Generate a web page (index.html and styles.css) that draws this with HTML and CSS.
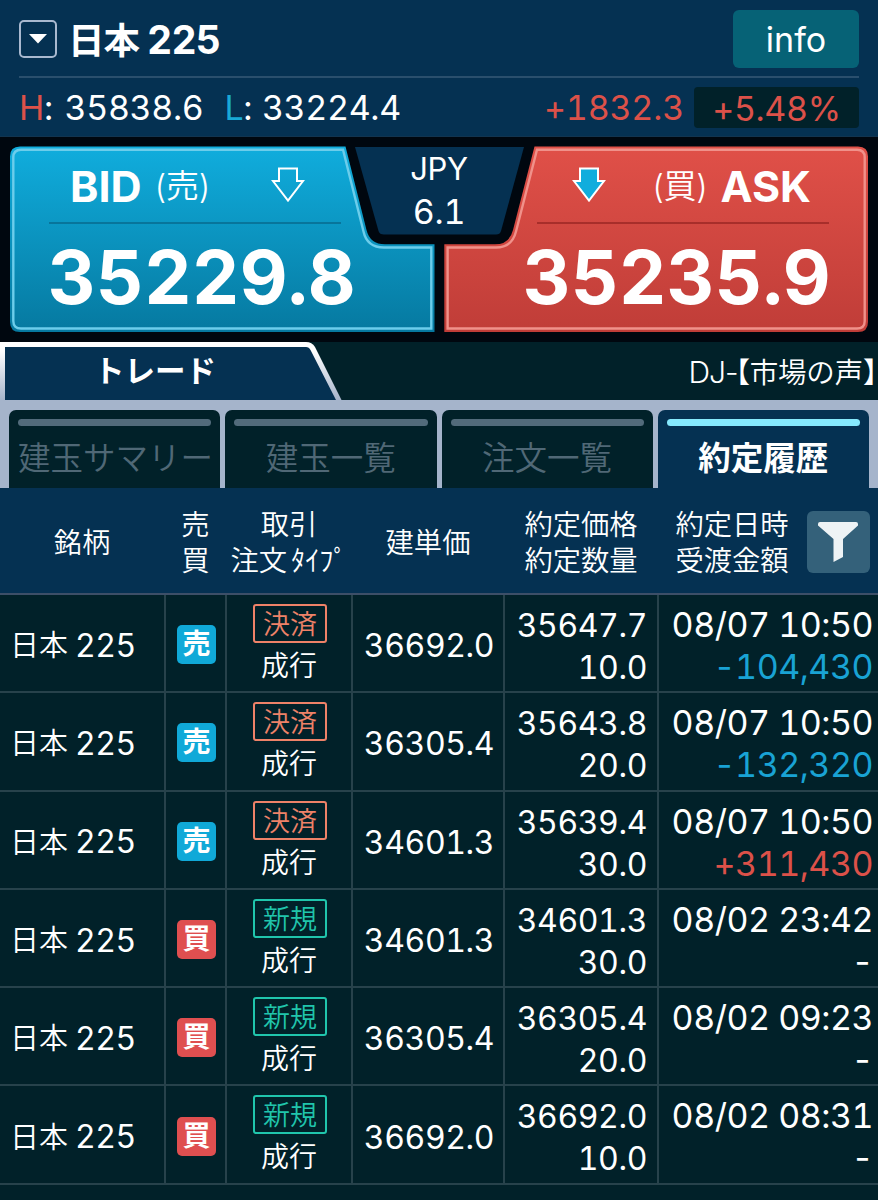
FILE: index.html
```html
<!DOCTYPE html>
<html lang="ja">
<head>
    <meta charset="UTF-8">
    <meta name="viewport" content="width=device-width, initial-scale=1.0">
    <title>日本225 - 約定履歴</title>
    <link rel="stylesheet" href="styles.css">
</head>
<body>
    <header class="header">
        <div class="title-row">
            <button type="button" class="dropdown" aria-label="銘柄選択"><svg width="18" height="10" viewBox="0 0 18 10"><path d="M0 0h18L9 9.500z" fill="#fff"/></svg></button>
            <h1>日本<span class="num">225</span></h1>
            <button type="button" class="btn-info">info</button>
        </div>
        <div class="stats-row">
            <span class="high"><b>H</b>: 35838.6</span>
            <span class="low"><b>L</b>: 33224.4</span>
            <span class="change">+1832.3</span>
            <span class="percent">+5.48%</span>
        </div>
    </header>

    <section class="prices">
        <svg class="price-shapes" width="878" height="206" viewBox="0 136 878 206">
            <defs>
                <linearGradient id="bid-fill" x1="0" y1="0" x2="0" y2="1">
                    <stop offset="0" stop-color="#10addd"/>
                    <stop offset="1" stop-color="#0679a0"/>
                </linearGradient>
                <linearGradient id="ask-fill" x1="0" y1="0" x2="0" y2="1">
                    <stop offset="0" stop-color="#e05048"/>
                    <stop offset="1" stop-color="#c03d38"/>
                </linearGradient>
            </defs>
            <path d="M20 146.500H345.500L366.500 230Q370 244.300 385 244.300H434.500V332H20Q10 332 10 322V156.500Q10 146.500 20 146.500Z" fill="url(#bid-fill)"/>
            <path d="M21 149.800H343L363.500 231.500Q367 247.500 384 247.500H431.300V328.500H21Q13.300 328.500 13.300 321V157.500Q13.300 149.800 21 149.800Z" fill="none" stroke="#6ccdeb" stroke-width="2.400"/>
            <path d="M858 146.500H534.500L513 230Q509.500 244.300 495 244.300H444.300V332H858Q868 332 868 322V156.500Q868 146.500 858 146.500Z" fill="url(#ask-fill)"/>
            <path d="M857 149.800H537L516 231.500Q512 247.500 496 247.500H447.600V328.500H857Q864.700 328.500 864.700 321V157.500Q864.700 149.800 857 149.800Z" fill="none" stroke="#f0918a" stroke-width="2.400"/>
            <path d="M355 147H524L501 231Q500 234.500 496 234.500H384Q379.500 234.500 378.500 231Z" fill="#053152"/>
        </svg>
        <div class="price bid">
            <div class="price-head">
                <strong>BID</strong><span class="side">(売)</span>
                <svg class="arrow" width="34" height="36" viewBox="0 0 34 36"><path d="M8 1.500H26V14H32L17 33.500L2 14H8Z" fill="none" stroke="#fff" stroke-width="2"/></svg>
            </div>
            <div class="price-value">35229.8</div>
        </div>
        <div class="spread"><span>JPY</span><span>6.1</span></div>
        <div class="price ask">
            <div class="price-head">
                <svg class="arrow" width="34" height="36" viewBox="0 0 34 36"><path d="M8 1.500H26V14H32L17 33.500L2 14H8Z" fill="#10addd" stroke="#fff" stroke-width="2"/></svg>
                <span class="side">(買)</span><strong>ASK</strong>
            </div>
            <div class="price-value">35235.9</div>
        </div>
    </section>

    <div class="news-bar">
        <div class="trade-tab">
            <svg class="trade-shape" width="344" height="58" viewBox="0 0 344 58">
                <defs>
                    <linearGradient id="tab-edge" x1="0" y1="0" x2="0" y2="1">
                        <stop offset=".15" stop-color="#fff"/>
                        <stop offset="1" stop-color="#a6b4cb"/>
                    </linearGradient>
                </defs>
                <path d="M0 0H306Q312 0 315 5L341.500 58H0Z" fill="url(#tab-edge)"/>
                <path d="M5 5H306Q309 5 310.500 8L336 58H5Z" fill="#053152"/>
            </svg>
            <span>トレード</span>
        </div>
        <div class="news">DJ-<span>【市場の声】</span></div>
    </div>

    <nav class="tabs">
        <a class="tab">建玉サマリー</a>
        <a class="tab">建玉一覧</a>
        <a class="tab">注文一覧</a>
        <a class="tab active">約定履歴</a>
    </nav>

    <div class="row table-head">
        <div>銘柄</div>
        <div>売<br>買</div>
        <div><span>取引<br>注文<span class="kana">ﾀｲﾌﾟ</span></span></div>
        <div>建単価</div>
        <div><span>約定価格<br>約定数量</span></div>
        <div class="date-head">
            <span>約定日時<br>受渡金額</span>
            <button type="button" class="filter" aria-label="フィルター"><svg width="40" height="40" viewBox="0 0 40 40"><path d="M2 0H38Q40 0 40 2V3.500L25 17V35L15.500 40V17L0 3.500V2Q0 0 2 0Z" fill="#eef3f5"/></svg></button>
        </div>
    </div>

    <main class="table">
        <div class="row">
            <div class="name">日本<span class="num">225</span></div>
            <div><span class="badge sell">売</span></div>
            <div class="type"><span class="tag close">決済</span><span>成行</span></div>
            <div class="cost">36692.0</div>
            <div class="fill"><span>35647.7</span><span>10.0</span></div>
            <div class="date"><span>08/07 10:50</span><span class="amount minus">-104,430</span></div>
        </div>
        <div class="row">
            <div class="name">日本<span class="num">225</span></div>
            <div><span class="badge sell">売</span></div>
            <div class="type"><span class="tag close">決済</span><span>成行</span></div>
            <div class="cost">36305.4</div>
            <div class="fill"><span>35643.8</span><span>20.0</span></div>
            <div class="date"><span>08/07 10:50</span><span class="amount minus">-132,320</span></div>
        </div>
        <div class="row">
            <div class="name">日本<span class="num">225</span></div>
            <div><span class="badge sell">売</span></div>
            <div class="type"><span class="tag close">決済</span><span>成行</span></div>
            <div class="cost">34601.3</div>
            <div class="fill"><span>35639.4</span><span>30.0</span></div>
            <div class="date"><span>08/07 10:50</span><span class="amount plus">+311,430</span></div>
        </div>
        <div class="row">
            <div class="name">日本<span class="num">225</span></div>
            <div><span class="badge buy">買</span></div>
            <div class="type"><span class="tag open">新規</span><span>成行</span></div>
            <div class="cost">34601.3</div>
            <div class="fill"><span>34601.3</span><span>30.0</span></div>
            <div class="date"><span>08/02 23:42</span><span class="amount">-</span></div>
        </div>
        <div class="row">
            <div class="name">日本<span class="num">225</span></div>
            <div><span class="badge buy">買</span></div>
            <div class="type"><span class="tag open">新規</span><span>成行</span></div>
            <div class="cost">36305.4</div>
            <div class="fill"><span>36305.4</span><span>20.0</span></div>
            <div class="date"><span>08/02 09:23</span><span class="amount">-</span></div>
        </div>
        <div class="row">
            <div class="name">日本<span class="num">225</span></div>
            <div><span class="badge buy">買</span></div>
            <div class="type"><span class="tag open">新規</span><span>成行</span></div>
            <div class="cost">36692.0</div>
            <div class="fill"><span>36692.0</span><span>10.0</span></div>
            <div class="date"><span>08/02 08:31</span><span class="amount">-</span></div>
        </div>
    </main>
</body>
</html>
```
FILE: styles.css
```css
* {
    box-sizing: border-box;
}

body {
    margin: 0;
    width: 878px;
    height: 1200px;
    overflow: hidden;
    background-color: #012129;
    color: #fff;
    font-family: Inter, 'Noto Sans CJK JP', sans-serif;
    font-feature-settings: 'tnum';
}

button {
    padding: 0;
    border: none;
    color: #fff;
    font-family: inherit;
}

/* header */
.header {
    height: 137px;
    padding: 0 19px;
    background: #053152;
    border-bottom: 1px solid #12344f;
}

.title-row {
    display: flex;
    align-items: center;
    height: 78px;
    border-bottom: 2px solid #2a4f6d;
}

.dropdown {
    display: flex;
    align-items: center;
    justify-content: center;
    width: 38px;
    height: 38px;
    margin-top: 2px;
    border: 2px solid #a9b9d0;
    border-radius: 5px;
    background: none;
}

h1 {
    margin: 4px 0 0 11px;
    font-size: 36.500px;
    font-weight: 700;
    line-height: 58px;
    letter-spacing: -1px;
}

    h1 .num {
        margin-left: 8px;
        font-size: 39px;
        letter-spacing: -.8px;
    }

.btn-info {
    width: 126px;
    height: 58px;
    margin-top: 1px;
    margin-left: auto;
    padding-top: 2px;
    border-radius: 6px;
    background: #066276;
    font-size: 34px;
}

.stats-row {
    display: flex;
    align-items: center;
    height: 58px;
    padding-top: 1px;
    font-size: 34px;
    font-weight: 370;
    letter-spacing: -.35px;
    white-space: nowrap;
}

    .stats-row b {
        font-weight: 400;
    }

.high {
    word-spacing: 3px;
}

.high b {
    color: #dc5149;
}

.low {
    margin-left: 21px;
    word-spacing: 1px;
}

    .low b {
        color: #19a9d6;
    }

.change {
    margin-left: auto;
    color: #dc5149;
    letter-spacing: -.2px;
}

.percent {
    width: 165px;
    height: 41px;
    margin-left: 10px;
    border-radius: 4px;
    background: #012129;
    color: #dc5149;
    line-height: 43px;
    text-align: center;
}

/* bid / ask */
.prices {
    position: relative;
    display: flex;
    justify-content: space-between;
    height: 205px;
    background: #00070f;
}

.price-shapes {
    position: absolute;
    top: -1px;
    left: 0;
}

.price,
.spread {
    position: relative;
}

.price {
    width: 292px;
    padding-top: 14px;
}

.bid {
    margin-left: 49px;
}

.ask {
    margin-right: 49px;
}

.price-head {
    display: flex;
    align-items: center;
    height: 73px;
    padding-bottom: 3px;
    border-bottom: 2px solid rgba(0, 30, 50, .28);
}

.ask .price-head {
    border-bottom-color: rgba(90, 0, 0, .35);
}

    .price-head strong {
        margin-top: 2px;
        font-size: 43px;
        font-weight: 700;
    }

.side {
    margin-top: -3px;
    font-size: 33px;
    font-weight: 350;
    letter-spacing: -.5px;
}

.bid .price-head {
    padding-left: 21px;
}

.bid .side {
    margin-left: 12px;
}

.bid .arrow {
    margin-left: auto;
    margin-right: 36px;
}

.ask .price-head {
    padding-right: 18px;
}

.ask .arrow {
    margin-left: 35px;
}

.ask .side {
    margin-left: auto;
    margin-right: 12px;
}

.price-value {
    width: 320px;
    margin-left: -1px;
    font-size: 74px;
    font-weight: 650;
    line-height: 106px;
    letter-spacing: .1px;
}

.ask .price-value {
    margin-left: -14px;
}

.spread {
    display: flex;
    flex-direction: column;
    align-items: center;
    padding-top: 10px;
    font-size: 31px;
    line-height: 43px;
    letter-spacing: -.3px;
}

    .spread span:last-child {
        font-size: 34px;
    }

/* trade tab and news ticker */
.news-bar {
    display: flex;
    justify-content: space-between;
    height: 58px;
}

.trade-tab {
    position: relative;
    width: 344px;
    padding-left: 94px;
    font-size: 30.500px;
    font-weight: 600;
    line-height: 58px;
}

    .trade-tab span {
        position: relative;
    }

.trade-shape {
    position: absolute;
    top: 0;
    left: 0;
}

.news {
    padding-right: 1px;
    font-size: 30px;
    font-weight: 350;
    font-feature-settings: normal;
    line-height: 60px;
    letter-spacing: -1px;
    white-space: nowrap;
}

    .news span {
        margin-left: -2px;
        font-size: 28.500px;
        font-feature-settings: 'halt';
        letter-spacing: -.2px;
    }

/* tabs */
.tabs {
    display: flex;
    gap: 5px;
    height: 88px;
    padding: 10px 9px 0;
    background: #a5b4cb;
}

.tab {
    flex: 1;
    min-width: 0;
    padding: 9px 9px 0;
    border-radius: 7px 7px 0 0;
    background: #012129;
    color: #506876;
    font-size: 32.500px;
    font-weight: 350;
    line-height: 65px;
    text-align: center;
    white-space: nowrap;
}

    .tab::before {
        content: "";
        display: block;
        height: 7px;
        border-radius: 4px;
        background: #526b7b;
    }

    .tab.active {
        background: #053152;
        color: #fff;
        font-weight: 700;
    }

        .tab.active::before {
            background: #86e9fd;
        }

/* order history */
.row {
    display: grid;
    grid-template-columns: 166px 61px 126px 152px 154px 219px;
    height: 98.300px;
    border-bottom: 2px solid #27424b;
}

    .row > div {
        display: flex;
        align-items: center;
        justify-content: center;
        border-right: 2px solid #27424b;
    }

        .row > div:last-child {
            border-right: none;
        }

.table-head {
    height: 107px;
    background: #053152;
    border-bottom-color: #3d4f68;
    font-size: 28.300px;
    font-weight: 350;
    line-height: 36px;
    text-align: center;
}

    .row.table-head > div {
        padding: 5px 2px 0 0;
        border: none;
    }

.kana {
    margin-left: 4px;
}

.row > .date-head > span {
    margin-left: -19px;
}

.filter {
    display: flex;
    align-items: center;
    justify-content: center;
    width: 63px;
    height: 62px;
    margin: -3px -29px 0 18px;
    border-radius: 6px;
    background: #34617a;
}

.row > .name {
    justify-content: flex-start;
    padding-left: 10px;
    font-size: 29px;
    font-weight: 350;
}

.name .num {
    margin-top: 4px;
    margin-left: 7px;
    font-size: 32px;
    font-weight: 400;
    letter-spacing: -.5px;
}

.badge {
    width: 39px;
    height: 39px;
    margin: 3px 0 0 2px;
    border-radius: 5px;
    font-size: 28px;
    font-weight: 700;
    line-height: 39px;
    text-align: center;
}

.sell {
    background: #10a9d8;
}

.buy {
    background: #df4f50;
}

.row > .type {
    flex-direction: column;
    justify-content: flex-start;
    padding: 9px 0 0 2px;
    font-size: 28px;
    font-weight: 350;
    line-height: 46px;
}

.type > span:last-child {
    margin-left: -2px;
}

.tag {
    width: 74px;
    height: 39px;
    border: 2px solid;
    border-radius: 3px;
    font-size: 27px;
    line-height: 37px;
    text-align: center;
}

.tag.close {
    color: #ee8268;
}

.tag.open {
    color: #20c5ac;
}

.cost,
.fill {
    font-size: 32px;
    letter-spacing: -.4px;
}

.row > .cost {
    padding: 5px 0 0 2px;
}

.row > .fill,
.row > .date {
    flex-direction: column;
    align-items: flex-end;
    justify-content: flex-start;
    padding: 10px 10px 0 0;
    line-height: 42px;
}

.row > .date {
    padding-right: 5px;
    padding-top: 9px;
    font-size: 34px;
    letter-spacing: -.5px;
}

.minus {
    color: #19a3d4;
}

.plus {
    color: #dc5149;
}
```
